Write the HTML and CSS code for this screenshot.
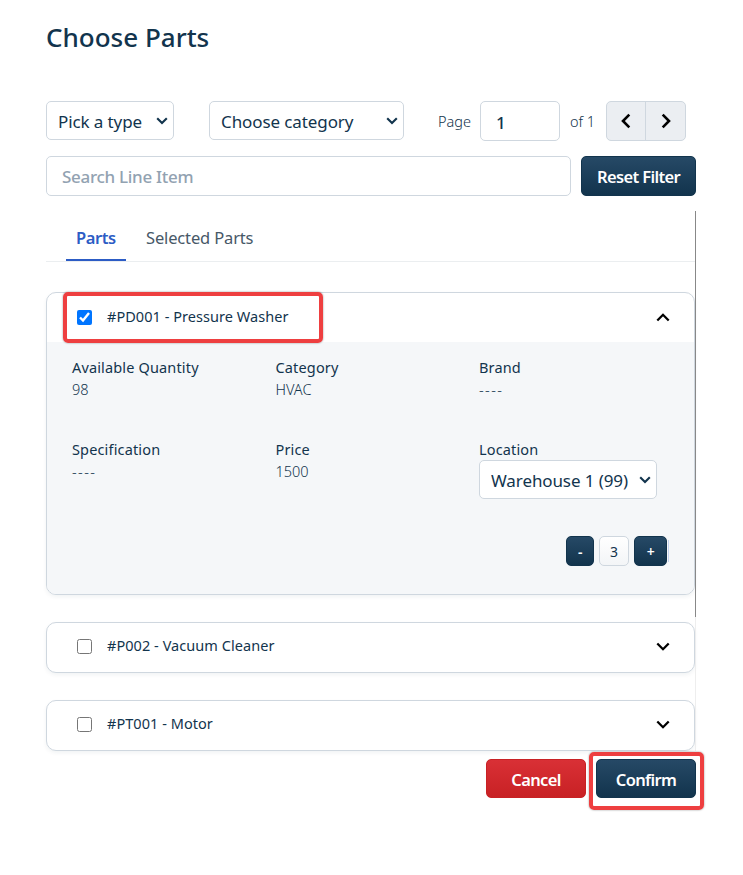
FILE: index.html
```html
<!DOCTYPE html>
<html lang="en">
<head>
  <meta charset="UTF-8">
  <title>Choose Parts</title>
  <link rel="stylesheet" href="styles.css">
</head>
<body>
  <div class="modal">
    <h2>Choose Parts</h2>

    <div class="filters">
      <div class="select-wrap type-select">
        <select id="type"><option>Pick a type</option></select>
        <svg class="caret" viewBox="0 0 12 8"><path d="M1.2 1.2 6 6l4.8-4.8"/></svg>
      </div>
      <div class="select-wrap category-select">
        <select id="category"><option>Choose category</option></select>
        <svg class="caret" viewBox="0 0 12 8"><path d="M1.2 1.2 6 6l4.8-4.8"/></svg>
      </div>
      <label class="page-label" for="page">Page</label>
      <input type="text" id="page" class="page-input" value="1">
      <span class="page-total">of 1</span>
      <div class="pager">
        <button type="button" aria-label="Previous"><svg viewBox="0 0 10 16"><path d="M8.3 1.7 2 8l6.3 6.3"/></svg></button>
        <button type="button" aria-label="Next"><svg viewBox="0 0 10 16"><path d="M1.7 1.7 8 8l-6.3 6.3"/></svg></button>
      </div>
    </div>

    <div class="search-row">
      <input type="text" class="search-input" placeholder="Search Line Item">
      <button type="button" class="btn btn-primary reset-btn">Reset Filter</button>
    </div>

    <div class="scroll-area">
      <div class="scroll-content">
        <div class="tabs">
          <a class="tab active">Parts</a>
          <a class="tab">Selected Parts</a>
        </div>

        <div class="card open">
          <div class="card-header">
            <input type="checkbox" id="part1" checked>
            <label for="part1">#PD001 - Pressure Washer</label>
            <svg class="chevron" viewBox="0 0 14 9"><path d="M1.3 7.5 7 1.8l5.7 5.7"/></svg>
            <div class="highlight highlight-part"></div>
          </div>
          <div class="card-body">
            <div class="details">
              <div class="field"><h4>Available Quantity</h4><p>98</p></div>
              <div class="field"><h4>Category</h4><p>HVAC</p></div>
              <div class="field"><h4>Brand</h4><p class="empty">----</p></div>
              <div class="field"><h4>Specification</h4><p class="empty">----</p></div>
              <div class="field"><h4>Price</h4><p>1500</p></div>
              <div class="field">
                <h4>Location</h4>
                <div class="select-wrap location-select">
                  <select id="location"><option>Warehouse 1 (99)</option></select>
                  <svg class="caret" viewBox="0 0 12 8"><path d="M1.2 1.2 6 6l4.8-4.8"/></svg>
                </div>
              </div>
            </div>
            <div class="quantity">
              <button type="button" class="btn btn-primary minus">-</button>
              <span class="count">3</span>
              <button type="button" class="btn btn-primary plus">+</button>
              <span class="quantity-end"></span>
            </div>
          </div>
        </div>

        <div class="card">
          <div class="card-header">
            <input type="checkbox" id="part2">
            <label for="part2">#P002 - Vacuum Cleaner</label>
            <svg class="chevron" viewBox="0 0 14 9"><path d="M1.3 1.5 7 7.2l5.7-5.7"/></svg>
          </div>
        </div>

        <div class="card">
          <div class="card-header">
            <input type="checkbox" id="part3">
            <label for="part3">#PT001 - Motor</label>
            <svg class="chevron" viewBox="0 0 14 9"><path d="M1.3 1.5 7 7.2l5.7-5.7"/></svg>
          </div>
        </div>
      </div>
      <div class="scroll-track"><div class="scroll-thumb"></div></div>
    </div>

    <div class="footer">
      <button type="button" class="btn btn-danger">Cancel</button>
      <div class="confirm-wrap">
        <button type="button" class="btn btn-primary">Confirm</button>
        <div class="highlight highlight-confirm"></div>
      </div>
    </div>
  </div>
</body>
</html>
```

FILE: styles.css
```css
* {
  box-sizing: border-box;
}

body {
  margin: 0;
  background-color: #fff;
  color: #12344d;
  font-family: "Noto Sans", "Open Sans", sans-serif;
  font-size: 14px;
}

input,
select,
button {
  font-family: inherit;
  margin: 0;
}

.modal {
  width: 650px;
  min-height: 875px;
  margin-left: 46px;
  padding-top: 18px;
}

h2 {
  margin: 0;
  height: 83px;
  font-size: 26px;
  font-weight: 500;
  line-height: 38px;
}

.filters {
  display: flex;
  align-items: center;
  height: 40px;
}

.select-wrap {
  position: relative;
}

.select-wrap select {
  appearance: none;
  display: block;
  width: 100%;
  height: 39px;
  padding: 2px 11px 0;
  border: 1px solid #cfd7df;
  border-radius: 5px;
  background-color: #fff;
  color: #12344d;
  font-size: 17px;
  font-weight: 450;
  letter-spacing: -0.1px;
}

.caret {
  position: absolute;
  right: 6px;
  top: 16px;
  width: 12px;
  height: 8px;
}

svg path {
  fill: none;
  stroke: #12344d;
  stroke-width: 2.1;
}

.type-select {
  width: 128px;
  margin-right: 35px;
}

.category-select {
  width: 195px;
  margin-right: 34px;
}

.type-select,
.category-select {
  align-self: flex-start;
}

.page-label,
.page-total {
  font-size: 14.5px;
  font-weight: 300;
}

.page-label {
  width: 42px;
}

.page-input,
.search-input {
  height: 40px;
  padding: 2px 15px 0;
  border: 1px solid #cfd7df;
  border-radius: 5px;
  color: #12344d;
  font-size: 17px;
  font-weight: 500;
}

.page-input {
  width: 80px;
}

.page-total {
  width: 46px;
  padding-left: 10px;
}

.pager {
  display: flex;
  width: 80px;
  height: 40px;
  border: 1px solid #cfd7df;
  border-radius: 5px;
  background-color: #ebeef2;
}

.pager button {
  display: flex;
  width: 38px;
  align-items: center;
  justify-content: center;
  padding: 0;
  border: 0;
  background: none;
}

.pager button + button {
  width: 40px;
  border-left: 1px solid #cfd7df;
}

.pager svg {
  width: 10px;
  height: 16px;
}

.pager path {
  stroke: #000;
  stroke-width: 2.6;
}

.search-row {
  display: flex;
  gap: 10px;
  margin-top: 15px;
}

.search-input {
  flex: 1;
  min-width: 0;
  padding-top: 0;
  letter-spacing: -0.3px;
}

.search-input::placeholder {
  color: #92a2b1;
}

.btn {
  padding: 1px 0 0;
  border: 1px solid #12344d;
  border-radius: 5px;
  color: #fff;
  font-size: 16.5px;
  font-weight: 600;
  letter-spacing: -0.65px;
}

.btn-primary {
  background-image: linear-gradient(#264966, #12344d);
}

.btn-danger {
  border-color: #c82124;
  background-image: linear-gradient(#d93036, #c82124);
}

.reset-btn {
  width: 115px;
  height: 40px;
}

.scroll-area {
  display: flex;
  height: 540px;
  margin-top: 15px;
}

.scroll-content {
  width: 649px;
}

.scroll-track {
  width: 1px;
  background-color: #eee;
}

.scroll-thumb {
  height: 406px;
  background-color: #888;
}

.tabs {
  display: flex;
  gap: 10px;
  height: 51px;
  padding: 0 20px;
  border-bottom: 1px solid #ebeef0;
}

.tab {
  height: 50px;
  padding: 15px 10px 0;
  color: #475867;
  font-size: 16.5px;
  font-weight: 400;
  line-height: 24px;
  letter-spacing: -0.15px;
}

.tab.active {
  width: 60px;
  border-bottom: 2px solid #2c5cc5;
  color: #2c5cc5;
  font-weight: 600;
  letter-spacing: -0.4px;
}

.card {
  height: 51px;
  margin-top: 27px;
  border: 1px solid #cfd7df;
  border-radius: 10px;
  background-color: #fff;
  box-shadow: 0 2px 4px rgba(24, 50, 71, 0.06);
}

.card.open {
  height: 303px;
  margin-top: 30px;
}

.card-header {
  position: relative;
  display: flex;
  align-items: center;
  height: 47px;
  padding: 0 24px 0 30px;
}

.open .card-header {
  height: 49px;
}

.card-header input {
  width: 15px;
  height: 15px;
  margin-right: 15px;
}

.card-header label {
  flex: 1;
  padding-bottom: 3px;
  font-size: 14.5px;
  font-weight: 400;
  letter-spacing: 0.05px;
}

.chevron {
  width: 14px;
  height: 9px;
}

.chevron path {
  stroke: #000;
  stroke-width: 2.3;
}

.card-body {
  height: 252px;
  padding: 14px 25px 0;
  border-radius: 0 0 9px 9px;
  background-color: #f5f7f9;
}

.details {
  display: grid;
  grid-template-columns: 203.5px 203.5px 1fr;
  grid-template-rows: 82px 98px;
}

.field h4,
.field p {
  margin: 0;
  font-size: 14.5px;
  line-height: 22px;
}

.field h4 {
  font-weight: 400;
  letter-spacing: 0.15px;
}

.field p {
  font-weight: 300;
}

.field .empty {
  letter-spacing: 1.4px;
}

.location-select {
  width: 178px;
}

.quantity {
  display: flex;
  justify-content: flex-end;
  align-items: center;
}

.quantity .btn,
.count {
  height: 30px;
  font-size: 14px;
}

.minus {
  width: 28px;
}

.plus {
  width: 33px;
}

.count {
  width: 30px;
  margin: 0 5px;
  border: 1px solid #cfd7df;
  border-radius: 5px;
  background-image: linear-gradient(#fff, #f3f5f7);
  line-height: 29px;
  text-align: center;
}

.quantity-end {
  width: 1px;
  height: 22px;
  margin-left: 1px;
  background-color: #c5d3ee;
}

.footer {
  display: flex;
  justify-content: flex-end;
  gap: 10px;
  margin-top: 8px;
}

.footer .btn {
  display: block;
  width: 100px;
  height: 39px;
}

.confirm-wrap {
  position: relative;
}

/* red callout frames */
.highlight {
  position: absolute;
  border: 4px solid #ee3f40;
  border-radius: 5px;
  box-shadow: 0 0 2px rgba(0, 0, 0, 0.45);
  pointer-events: none;
}

.highlight-part {
  left: 16px;
  top: -1px;
  width: 260px;
  height: 51px;
}

.highlight-confirm {
  left: -7px;
  top: -7px;
  width: 115px;
  height: 58px;
}
```
